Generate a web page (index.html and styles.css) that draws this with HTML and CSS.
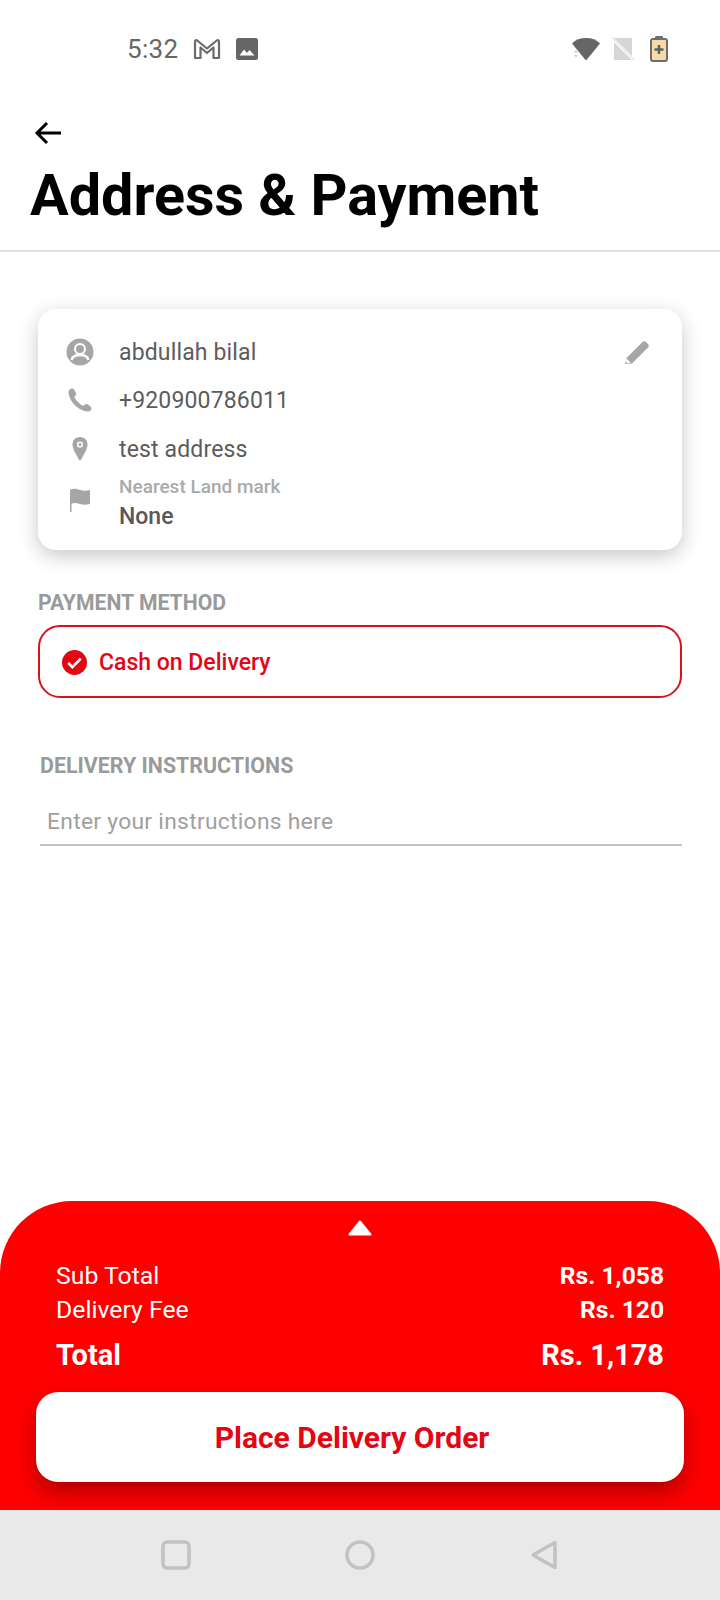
FILE: index.html
```html
<!DOCTYPE html>
<html lang="en">
<head>
<meta charset="utf-8">
<title>Address &amp; Payment</title>
<link rel="stylesheet" href="styles.css">
</head>
<body>
<div class="page">
  <div class="status">
    <div class="status-left">
      <span class="time">5:32</span>
      <svg class="ic-gmail" viewBox="0 0 28 22"><path d="M2 20V3.500c0-1.200 1.300-1.800 2.200-1L14 10.500l9.800-8c.9-.8 2.200-.2 2.200 1V20h-5.500V9.500L14 15 7.500 9.500V20z" fill="none" stroke="#6a6a6a" stroke-width="2.200" stroke-linejoin="round"/></svg>
      <svg class="ic-image" viewBox="0 0 22 22"><rect width="22" height="22" rx="2.500" fill="#666"/><path d="M3.500 17.500l4.500-6 3 3.500 2.500-3 5 5.500z" fill="#fff"/></svg>
    </div>
    <div class="status-right">
      <svg class="ic-wifi" viewBox="0 0 30 24"><path d="M1 6.500C4.500 2.800 9.500 1 15 1s10.500 1.800 14 5.500L15.500 23h-1z" fill="#666"/><path d="M3 15.500l2-2.500 2 2.500zM3 18l2 2.500L7 18z" fill="#ccc"/></svg>
      <svg class="ic-sim" viewBox="0 0 24 24"><rect x="3" y="1" width="18" height="22" fill="#d6d6d6"/><path d="M0 0l24 24" stroke="#fff" stroke-width="3"/><path d="M1 0l22 23" stroke="#d6d6d6" stroke-width="1"/></svg>
      <svg class="ic-battery" viewBox="0 0 18 26"><rect x="5" y="0" width="8" height="4" rx="1" fill="#6e6e6e"/><rect x="1" y="3" width="16" height="22" rx="2" fill="#f6dca2" stroke="#6e6e6e" stroke-width="2"/><path d="M9 9v9M4.500 13.500h9" stroke="#55656a" stroke-width="2.500"/></svg>
    </div>
  </div>

  <header class="head">
    <svg class="ic-back" viewBox="0 0 28 24"><path d="M27 12H3M13 2L3 12l10 10" fill="none" stroke="#000" stroke-width="3"/></svg>
    <h1 class="title">Address &amp; Payment</h1>
  </header>

  <main class="main">
    <section class="card">
      <svg class="ic-edit" viewBox="0 0 26 26"><path d="M1 25l1.500-6L18.500 3c1-1 2.500-1 3.500 0l2 2c1 1 1 2.500 0 3.500L8 24.500z" fill="#a6a6a6"/><path d="M1 25l1.500-5.500 4 4z" fill="#fff"/><path d="M1 25l.7-2.500 1.800 1.800z" fill="#a6a6a6"/></svg>
      <div class="row">
        <svg class="ic" viewBox="0 0 28 28"><circle cx="14" cy="14" r="13.500" fill="#a6a6a6"/><circle cx="14" cy="11" r="5" fill="none" stroke="#fff" stroke-width="2"/><path d="M5.500 22c1-3.500 5-5 8.500-5s7.500 1.500 8.500 5" fill="none" stroke="#fff" stroke-width="2.500"/></svg>
        <span class="row-text">abdullah bilal</span>
      </div>
      <div class="row">
        <svg class="ic" viewBox="0 0 28 28"><path d="M6.500 2.500c-1.500-.5-4 1.500-4 3.500C3 15.500 12.500 25 22 25.500c2 0 4-2 3.500-3.500-.3-1.500-4-4-5.500-4-1 0-2 1.800-3 1.800C14.500 19 9 13.500 8.500 11c0-1 1.800-2 1.800-3C10.300 6.500 8 3 6.500 2.500z" fill="#a6a6a6"/></svg>
        <span class="row-text">+920900786011</span>
      </div>
      <div class="row row-pin">
        <svg class="ic" viewBox="0 0 28 28"><path d="M14 2C9.500 2 6.500 5.500 6.500 9.500 6.500 15 14 26 14 26s7.500-11 7.500-16.500C21.500 5.500 18.500 2 14 2z" fill="#a6a6a6"/><circle cx="14" cy="9.500" r="2.300" fill="none" stroke="#fff" stroke-width="1.600"/></svg>
        <span class="row-text">test address</span>
      </div>
      <div class="row row-mark">
        <svg class="ic ic-flag" viewBox="0 0 28 28"><path d="M4 3.500c4-1.500 7-.5 10 .5s6 1 10 0v14c-4 1-7 1-10 0s-6-1.500-8.500-.5V26H4z" fill="#a6a6a6"/></svg>
        <div class="mark">
          <span class="mark-label">Nearest Land mark</span>
          <span class="mark-value">None</span>
        </div>
      </div>
    </section>

    <h2 class="label">PAYMENT METHOD</h2>
    <div class="method">
      <svg class="ic-check" viewBox="0 0 24 24"><circle cx="12" cy="12" r="12" fill="#e30613"/><path d="M6 12.500l4 4 8-8.200" fill="none" stroke="#fff" stroke-width="2.600"/></svg>
      <span>Cash on Delivery</span>
    </div>

    <h2 class="label label-second">DELIVERY INSTRUCTIONS</h2>
    <div class="input">Enter your instructions here</div>
  </main>

  <section class="panel">
    <svg class="ic-up" viewBox="0 0 24 16"><path d="M12 1.500L22.500 14.500h-21z" fill="#fff" stroke="#fff" stroke-width="2" stroke-linejoin="round"/></svg>
    <div class="line"><span>Sub Total</span><b>Rs. 1,058</b></div>
    <div class="line"><span>Delivery Fee</span><b>Rs. 120</b></div>
    <div class="line line-total"><b>Total</b><b>Rs. 1,178</b></div>
    <div class="cta">Place Delivery Order</div>
  </section>

  <nav class="nav">
    <svg class="nav-ic" viewBox="0 0 30 30"><rect x="2" y="2" width="26" height="26" rx="4" fill="none" stroke="#c2c2c2" stroke-width="3.500"/></svg>
    <svg class="nav-ic" viewBox="0 0 30 30"><circle cx="15" cy="15" r="13" fill="none" stroke="#c2c2c2" stroke-width="3.500"/></svg>
    <svg class="nav-ic" viewBox="0 0 30 30"><path d="M26 2.500V27.500L4 15z" fill="none" stroke="#c2c2c2" stroke-width="3.500" stroke-linejoin="round"/></svg>
  </nav>
</div>
</body>
</html>
```
FILE: styles.css
```css
* { box-sizing: border-box; }
html, body { margin: 0; padding: 0; background: #fff; }
body { font-family: Roboto, "Liberation Sans", sans-serif; }
.page { width: 720px; height: 1600px; display: flex; flex-direction: column; overflow: hidden; }

.status { height: 98px; flex: none; display: flex; justify-content: space-between; align-items: center; padding: 0 52px 0 127px; }
.status-left, .status-right { display: flex; align-items: center; }
.time { font-size: 26px; color: #666; margin-right: 15px; letter-spacing: .3px; }
.ic-gmail { width: 28px; height: 22px; margin-right: 15px; }
.ic-image { width: 22px; height: 22px; }
.ic-wifi { width: 30px; height: 24px; margin-right: 10px; }
.ic-sim { width: 24px; height: 24px; margin-right: 15px; }
.ic-battery { width: 18px; height: 26px; }

.head { flex: none; height: 154px; padding: 23px 0 0 30px; border-bottom: 2px solid #e2e2e2; }
.ic-back { display: block; width: 28px; height: 24px; margin-left: 4px; }
.title { margin: 18px 0 0; font-size: 57.500px; line-height: 66px; font-weight: 700; color: #000; }

.main { flex: 1; padding: 57px 38px 0; }
.card { position: relative; height: 241px; border-radius: 18px; background: #fff; box-shadow: 0 6px 20px rgba(0,0,0,.22); padding: 19px 28px 0 28px; }
.ic-edit { position: absolute; top: 30px; right: 32px; width: 26px; height: 26px; }
.row { display: flex; align-items: center; height: 48px; }
.row-pin { margin-top: 1px; }
.ic { flex: none; width: 28px; height: 28px; }
.ic-flag { margin-top: -10px; }
.row-text { margin-left: 25px; font-size: 23px; color: #5c5c5c; letter-spacing: .15px; }
.row-mark { height: 64px; }
.mark { margin-left: 25px; display: flex; flex-direction: column; }
.mark-label { font-size: 19px; line-height: 24px; font-weight: 500; color: #aaa; }
.mark-value { font-size: 23px; line-height: 36px; font-weight: 500; color: #585858; }

.label { margin: 38px 0 0; font-size: 21.200px; line-height: 30px; font-weight: 700; color: #9a9a9a; }
.method { display: flex; align-items: center; height: 73px; margin-top: 7px; padding: 2px 0 0 22px; border: 2px solid #d8131b; border-radius: 22px; color: #e30613; font-size: 23px; font-weight: 500; }
.ic-check { width: 25px; height: 25px; margin-right: 12px; }
.label-second { margin: 53px 0 0 2px; font-size: 21.400px; }
.input { margin: 21px 0 0 2px; height: 44px; padding-left: 7px; border-bottom: 2px solid #c4c4c4; font-size: 22.800px; line-height: 40px; color: #a0a0a0; letter-spacing: .3px; }

.panel { flex: none; height: 309px; background: #ff0000; border-radius: 72px 72px 0 0; padding: 19px 36px 0; color: #fff; display: flex; flex-direction: column; overflow: hidden; }
.ic-up { display: block; flex: none; width: 24px; height: 16px; margin: 0 0 23px 312px; }
.line { display: flex; justify-content: space-between; padding: 0 20px; font-size: 24.800px; line-height: 34px; }
.line b { font-weight: 700; font-size: 24.600px; }
.line-total { font-size: 29px; line-height: 40px; margin-top: 8px; }
.line-total b { font-size: 29px; }
.cta { flex: none; margin-top: 17px; height: 90px; border-radius: 22px; background: #fff; color: #e30613; font-size: 30px; font-weight: 700; display: flex; align-items: center; justify-content: center; box-shadow: 0 10px 22px rgba(0,0,0,.32); padding-right: 16px; }

.nav { flex: none; height: 90px; background: #e9e9e9; display: flex; justify-content: center; gap: 154px; align-items: center; }
.nav-ic { width: 30px; height: 30px; }
```
